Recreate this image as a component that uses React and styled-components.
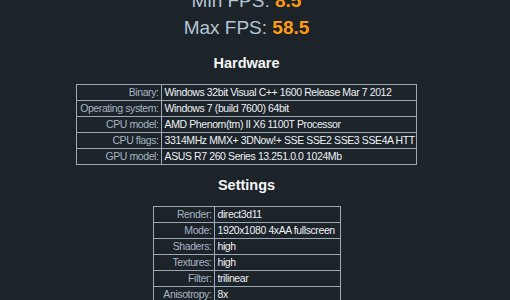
import React from "react";
import styled, { createGlobalStyle } from "styled-components";

const GlobalStyle = createGlobalStyle`
  html, body {
    margin: 0;
    padding: 0;
    background: #1c2329;
    overflow: hidden;
  }
  body {
    font-family: "Liberation Sans", Arial, sans-serif;
  }
`;

const hardware = [
  ["Binary:", "Windows 32bit Visual C++ 1600 Release Mar 7 2012"],
  ["Operating system:", "Windows 7 (build 7600) 64bit"],
  ["CPU model:", "AMD Phenom(tm) II X6 1100T Processor"],
  ["CPU flags:", "3314MHz MMX+ 3DNow!+ SSE SSE2 SSE3 SSE4A HTT"],
  ["GPU model:", "ASUS R7 260 Series 13.251.0.0 1024Mb"],
];

const settings = [
  ["Render:", "direct3d11"],
  ["Mode:", "1920x1080 4xAA fullscreen"],
  ["Shaders:", "high"],
  ["Textures:", "high"],
  ["Filter:", "trilinear"],
  ["Anisotropy:", "8x"],
  ["Occlusion:", "enabled"],
  ["Refraction:", "enabled"],
  ["Volumetric:", "enabled"],
];

function InfoTable({ rows, labelWidth = 0, valueWidth = 0 }) {
  return (
    <Table>
      <tbody>
        {rows.map(([label, value]) => (
          <tr key={label}>
            <LabelCell $minWidth={labelWidth}>{label}</LabelCell>
            <ValueCell $minWidth={valueWidth}>{value}</ValueCell>
          </tr>
        ))}
      </tbody>
    </Table>
  );
}

export default function App() {
  return (
    <>
      <GlobalStyle />
      <Page>
        <Scores>
          <FpsLine>
            Min FPS: <FpsValue>8.5</FpsValue>
          </FpsLine>
          <FpsLine>
            Max FPS: <FpsValue>58.5</FpsValue>
          </FpsLine>
        </Scores>

        <SectionTitle>Hardware</SectionTitle>
        <InfoTable rows={hardware} />

        <SectionTitle>Settings</SectionTitle>
        <InfoTable rows={settings} labelWidth={55} valueWidth={121} />
      </Page>
    </>
  );
}

const Page = styled.div`
  width: 493px;
  display: flex;
  flex-direction: column;
  align-items: center;
  margin-top: -13px;
`;

const Scores = styled.div`
  display: flex;
  flex-direction: column;
  align-items: center;
  margin-bottom: 2px;
`;

const FpsLine = styled.div`
  font-size: 19px;
  line-height: 27px;
  color: #b5c5d3;
  white-space: nowrap;
`;

const FpsValue = styled.span`
  color: #ff9a12;
  font-weight: bold;
`;

const SectionTitle = styled.h2`
  margin: 11px 0 12px;
  font-size: 14.5px;
  line-height: 18px;
  font-weight: bold;
  color: #f4f6f8;
`;

const Table = styled.table`
  border-collapse: collapse;
  font-size: 10.5px;
  letter-spacing: -0.4px;
  line-height: 15px;
`;

const Cell = styled.td`
  border: 1px solid #9aaab6;
  white-space: nowrap;
  min-width: ${(p) => p.$minWidth}px;
`;

const LabelCell = styled(Cell)`
  padding: 0 2px 0 3px;
  text-align: right;
  color: #a6b6c4;
`;

const ValueCell = styled(Cell)`
  padding: 0 1px 0 3px;
  text-align: left;
  color: #eef2f6;
`;
